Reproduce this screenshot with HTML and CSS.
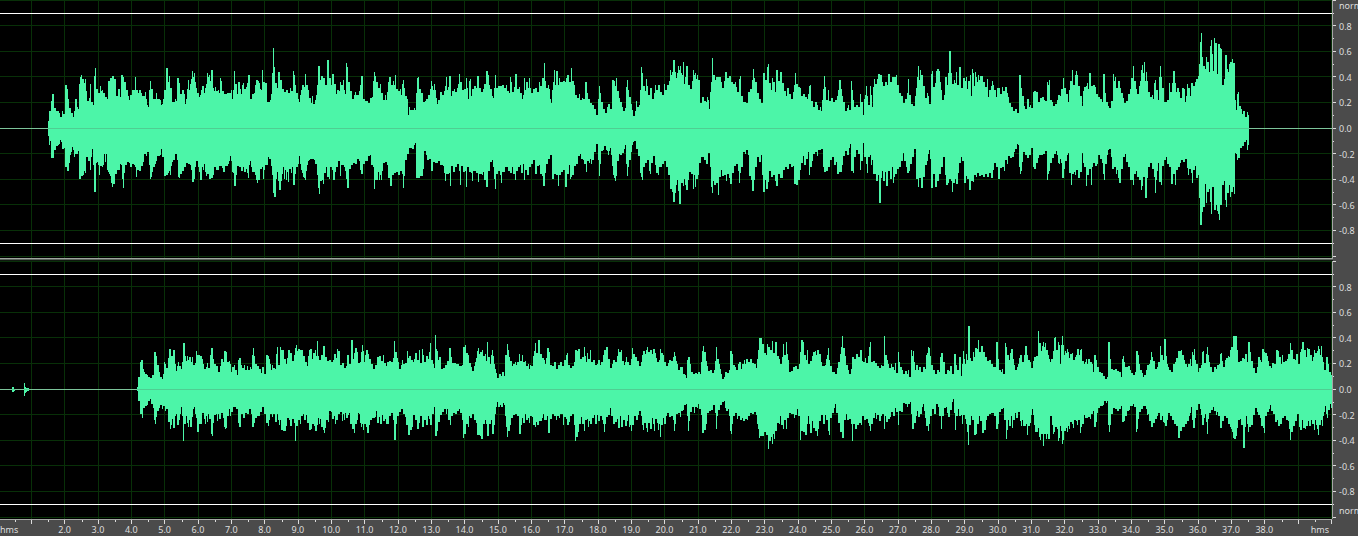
FILE: index.html
```html
<!DOCTYPE html>
<html lang="en">
<head>
<meta charset="utf-8">
<title>Waveform editor</title>
<link rel="stylesheet" href="styles.css">
</head>
<body>
<main class="editor">
  <section class="track" aria-label="Left channel">
    <svg class="wave" viewBox="0 0 1332 258" preserveAspectRatio="none"></svg>
    <div class="level">
      <svg class="level-ticks" viewBox="0 0 4 258" preserveAspectRatio="none"></svg>
      <div class="level-labels"><span>norm</span><span>0.8</span><span>0.6</span><span>0.4</span><span>0.2</span><span>0.0</span><span>-0.2</span><span>-0.4</span><span>-0.6</span><span>-0.8</span><span></span></div>
    </div>
  </section>
  <div class="divider"></div>
  <section class="track" aria-label="Right channel">
    <svg class="wave" viewBox="0 0 1332 258" preserveAspectRatio="none"></svg>
    <div class="level">
      <svg class="level-ticks" viewBox="0 0 4 258" preserveAspectRatio="none"></svg>
      <div class="level-labels"><span></span><span>0.8</span><span>0.6</span><span>0.4</span><span>0.2</span><span>0.0</span><span>-0.2</span><span>-0.4</span><span>-0.6</span><span>-0.8</span><span class="norm-end">norm</span></div>
    </div>
  </section>
  <footer class="time">
    <div class="time-scale">
      <svg class="time-ticks" viewBox="0 0 1332 5" preserveAspectRatio="none"></svg>
      <div class="time-labels"></div>
    </div>
  </footer>
</main>
<script src="waveform.js"></script>
</body>
</html>
```
FILE: styles.css
```css
* {
  box-sizing: border-box;
}

body {
  margin: 0;
  background: #4b4b4b;
  color: #dedede;
  font: 9px/12px "Noto Sans", "Open Sans", sans-serif;
}

.editor {
  display: flex;
  flex-direction: column;
  height: 100vh;
  overflow: hidden;
}

.track {
  display: flex;
  flex: 1;
  min-height: 0;
}

.wave {
  display: block;
  flex: 1;
  min-width: 0;
  height: 100%;
  background: #000;
  shape-rendering: crispEdges;
}

.level {
  display: flex;
  flex: none;
  width: 26px;
  height: 100%;
  border-left: 1px solid #a6a6a6;
  overflow: hidden;
}

.level-ticks {
  flex: none;
  width: 4px;
  height: 100%;
  shape-rendering: crispEdges;
}

.level-labels {
  display: grid;
  grid-template-rows: 13px repeat(9, 1fr) 15px;
  align-items: center;
  padding-left: 2px;
}

.level-labels span {
  padding-top: 2px;
  white-space: nowrap;
}

.level-labels span:first-child {
  align-self: start;
  padding-top: 0;
}

.level-labels .norm-end {
  padding-top: 0;
}

.divider {
  flex: none;
  height: 3px;
  margin-right: 25px;
  border-top: 1px solid #a0a5a0;
  border-bottom: 1px solid #101810;
  background: #5a625a;
}

.time {
  flex: none;
  height: 17px;
  margin-right: 26px;
  border-top: 1px solid #a6a6a6;
}

.time-ticks {
  display: block;
  width: 100%;
  height: 4px;
  shape-rendering: crispEdges;
}

.time-labels {
  display: grid;
  grid-template-columns: 48px repeat(37, minmax(0, 1fr)) 51px;
  text-align: center;
}

.time-labels span:first-child {
  text-align: left;
}

.time-labels span:last-child {
  padding-right: 3px;
  text-align: right;
}

.grid {
  fill: #083008;
}

.limit {
  fill: #fff;
}

.zero {
  fill: #7cc49a;
}

.signal {
  fill: #4cf5a8;
}

.axis {
  fill: #4fce92;
}

.tick {
  fill: #dcdcdc;
}
```
FILE: waveform.js
```js
// Peak envelopes. Each section starts at `x`, with `y` as its vertical origin,
// and holds "position,level" steps at three units to the pixel.
const TRACKS = [
  [
    { x: 0, y: 30, start: 144, end: 1020,
      top: "144,273 147,242 153,212 156,192 162,233 168,244 177,248 180,261 186,243 189,252 195,165 201,177 204,206 207,234 213,248 219,261 222,243 225,207 231,231 234,237 237,162 240,141 243,135 246,147 252,159 255,147 258,183 261,213 267,204 270,162 273,216 279,225 282,138 285,114 288,177 294,190 300,167 303,183 306,180 309,190 315,201 321,207 324,153 330,144 336,138 342,147 348,198 354,177 360,200 363,135 369,141 372,155 378,180 384,198 387,210 390,195 396,180 402,179 405,141 408,180 414,189 417,180 423,189 426,198 435,186 438,207 441,224 444,231 447,180 450,153 453,177 459,207 468,190 471,207 480,210 483,225 486,222 489,207 492,180 498,114 504,156 507,138 510,174 516,216 525,207 528,213 531,144 537,159 540,192 546,180 552,192 555,222 558,207 561,177 564,150 567,180 570,162 573,147 576,123 579,141 582,129 585,156 588,174 591,189 597,201 600,195 603,180 606,168 612,189 615,174 618,162 621,129 624,141 627,135 630,153 633,120 639,174 642,183 645,171 648,183 654,180 657,189 660,144 663,153 666,183 672,192 681,189 693,180 696,207 699,180 702,123 705,162 711,192 714,156 720,177 723,192 726,165 729,159 732,177 738,171 741,159 744,135 750,207 756,192 762,189 765,165 768,150 774,153 777,159 780,177 783,180 786,120 789,156 795,159 801,216 810,210 813,192 816,130 819,54 822,111 825,159 831,174 834,126 840,150 846,177 852,187 858,180 864,189 870,174 873,183 879,123 882,135 885,165 888,189 894,207 897,216 900,195 903,180 906,165 912,171 915,132 918,165 924,180 927,204 933,219 936,198 939,222 945,210 948,195 951,165 954,108 960,150 963,138 969,144 975,165 981,90 987,144 993,165 996,132 1002,162 1008,192 1011,180 1017,183",
      bottom: "144,318 147,345 150,333 153,384 162,360 168,348 174,345 177,342 180,330 183,336 186,357 192,354 195,411 201,423 207,399 210,375 213,366 216,351 219,360 222,381 225,372 234,363 237,447 243,438 249,435 252,423 255,429 258,381 264,393 270,420 273,381 276,357 279,405 282,486 288,399 291,396 294,405 297,435 300,408 306,411 309,405 312,372 315,396 318,372 321,420 324,426 327,432 330,438 333,459 336,470 339,462 345,432 351,420 360,402 363,405 366,447 369,474 372,429 375,405 381,396 387,399 390,411 396,402 402,405 405,411 408,441 411,420 417,423 423,408 429,396 432,372 438,378 441,366 447,405 450,447 453,441 456,426 459,411 465,402 468,393 471,378 480,375 483,357 486,381 492,438 498,435 504,429 507,423 510,435 513,408 516,396 519,390 525,372 531,390 534,441 537,444 540,432 546,423 552,411 558,399 564,402 570,405 573,420 576,456 582,447 585,411 588,393 594,411 597,426 600,450 606,411 609,420 612,402 615,426 618,438 621,432 627,447 633,444 639,435 642,411 648,420 654,420 657,408 666,414 669,426 675,408 684,402 687,393 690,378 693,393 696,426 699,429 702,468 708,435 711,408 717,411 723,423 729,411 732,426 738,417 741,429 744,444 747,405 750,393 753,411 756,426 765,435 768,450 771,459 774,450 780,417 786,411 789,447 792,420 795,405 804,381 807,387 813,408 816,435 819,489 822,501 828,447 831,426 834,453 837,480 843,453 846,432 849,411 852,447 855,420 858,450 861,426 864,456 867,417 873,429 876,411 879,465 885,432 888,411 894,402 897,378 900,402 903,420 906,429 909,441 912,444 915,450 918,423 921,405 924,393 927,390 930,387 942,390 945,402 951,435 954,474 957,492 960,453 966,450 969,462 972,429 978,411 981,441 987,447 990,411 996,420 999,450 1005,426 1008,411 1014,393" },
    { x: 340, y: 30, start: 0, end: 1020,
      top: "0,156 3,165 9,150 12,180 15,192 18,99 21,110 24,156 30,183 36,207 42,195 45,186 48,195 57,183 60,165 63,138 69,207 75,213 84,218 90,204 96,201 99,153 102,126 105,138 108,156 114,174 120,162 123,189 129,210 135,195 138,210 141,186 144,156 147,141 153,165 159,153 162,165 165,135 168,177 174,183 180,177 183,195 186,162 189,150 192,174 195,198 201,207 204,255 207,231 210,240 222,234 225,240 228,189 231,144 234,141 237,177 243,189 249,216 255,213 258,207 264,195 270,177 273,153 276,168 279,180 282,162 285,180 288,204 291,222 294,210 300,186 306,195 312,183 315,168 318,141 321,180 324,171 327,138 333,198 336,183 342,177 345,186 351,174 354,162 357,132 360,156 366,180 372,177 378,144 381,174 384,207 387,153 390,147 393,198 396,177 402,168 408,174 411,138 417,174 423,186 429,177 432,162 438,123 444,135 447,165 450,177 456,198 459,204 462,174 465,135 468,174 474,168 486,165 492,174 498,165 501,183 507,189 510,141 513,156 516,186 522,171 525,132 531,177 537,171 540,189 546,207 549,195 552,144 555,180 558,156 564,174 567,144 570,174 573,189 579,177 585,174 591,186 597,156 600,168 606,144 612,99 615,153 618,174 624,165 627,177 630,207 633,219 636,180 639,156 642,120 645,165 648,123 654,165 657,144 660,156 669,153 675,156 678,144 681,135 687,156 693,114 696,153 702,165 705,195 711,204 717,192 720,210 726,204 729,207 735,156 741,189 744,207 750,219 756,225 762,237 768,255 774,207 777,168 780,189 783,216 789,237 795,249 801,231 804,222 810,237 816,150 822,153 825,168 828,144 831,183 837,204 840,216 846,231 849,243 855,234 858,171 861,150 864,180 867,201 873,222 876,240 879,258 885,243 888,213 891,231 897,225 900,180 903,111 906,129 909,168 915,183 918,147 921,168 924,195 930,174 936,207 942,189 945,165 948,180 954,165 960,186 966,195 972,162 975,180 981,165 987,153 990,120 993,135 996,126 999,90 1005,126 1008,144 1011,129 1014,108 1017,120",
      bottom: "0,438 3,405 12,411 15,423 18,447 21,474 27,417 33,405 39,399 45,402 51,387 57,393 60,420 63,432 69,402 75,393 84,378 90,375 93,405 99,411 102,477 105,450 114,426 117,450 120,435 123,450 126,423 129,399 135,396 141,405 144,444 150,468 156,435 162,429 168,426 174,435 180,423 186,432 189,474 192,438 195,390 201,372 207,354 216,357 222,345 225,339 228,444 240,438 249,417 252,363 258,375 261,390 267,387 273,423 279,396 285,399 294,393 300,405 309,408 312,429 315,453 318,432 327,429 330,468 333,408 339,426 345,411 351,402 357,423 360,465 363,408 369,426 375,423 378,470 381,411 387,426 393,429 396,453 399,423 408,429 414,456 417,432 426,435 429,426 432,450 438,470 444,423 450,396 456,390 459,411 462,447 465,477 468,432 474,423 480,435 483,459 486,426 495,411 504,423 510,429 516,411 519,432 525,450 528,423 534,411 540,405 543,429 549,402 552,450 555,420 561,435 567,411 573,402 579,390 585,432 591,408 597,405 600,432 606,438 609,468 615,429 618,402 624,387 630,375 636,447 642,432 648,435 654,468 657,435 663,426 669,420 675,470 681,432 687,405 690,447 693,441 696,435 702,408 708,402 714,378 720,372 723,387 729,390 732,402 738,426 741,393 747,399 750,387 753,402 756,390 762,366 768,342 774,390 777,438 780,402 783,363 789,360 792,348 798,360 801,363 804,375 807,363 810,354 813,375 816,408 819,435 822,444 825,453 828,438 831,393 837,372 840,375 846,369 852,357 855,345 858,402 861,438 864,411 867,390 873,366 876,345 879,336 882,333 888,357 894,378 900,429 903,441 906,450 909,411 915,399 921,390 927,423 930,432 933,399 939,378 945,405 948,429 954,435 957,411 966,402 972,393 978,411 984,435 990,477 996,486 999,516 1005,489 1008,465 1011,450 1014,483 1017,522" },
    { x: 680, y: 30, start: 0, end: 1020,
      top: "0,108 3,129 6,135 9,96 12,162 15,141 18,108 24,165 30,177 36,153 39,120 42,135 45,129 48,147 51,135 54,150 60,219 66,201 72,213 78,216 81,201 84,210 87,237 90,186 93,156 96,84 99,135 105,150 108,141 117,141 123,156 126,174 132,153 135,126 141,144 147,138 153,156 159,162 165,156 168,171 171,186 177,147 180,138 183,198 189,216 198,219 204,186 210,177 216,150 219,117 222,144 225,156 231,189 237,207 243,219 249,129 255,150 261,111 264,102 267,159 273,180 276,144 279,156 285,186 288,120 294,153 300,126 306,159 312,183 318,198 321,174 327,192 333,207 339,186 342,165 345,129 348,162 354,171 360,174 363,198 369,192 375,201 381,207 384,192 387,168 390,165 393,213 399,231 405,216 411,225 414,240 420,231 423,243 426,210 429,177 432,138 435,171 438,210 444,180 447,213 453,204 459,216 465,210 471,198 474,180 477,150 483,177 486,198 489,216 495,243 501,234 504,225 507,240 513,153 516,180 519,210 522,231 528,225 534,231 540,192 543,216 549,255 552,207 555,195 558,168 561,198 564,225 570,168 573,195 576,231 579,171 582,147 585,162 591,147 594,132 600,135 606,156 609,168 615,156 621,165 624,132 630,156 636,141 645,141 648,135 651,165 657,189 663,198 669,219 675,207 681,189 684,147 687,195 693,222 699,228 705,198 708,174 711,141 714,108 717,150 720,120 723,135 729,168 735,204 741,189 744,198 747,222 753,132 756,123 759,171 765,159 768,123 771,117 777,123 780,156 783,180 786,210 792,195 795,141 801,165 804,129 807,63 813,129 816,162 822,150 825,159 828,126 831,165 837,111 843,174 849,144 855,153 858,141 861,177 864,153 870,135 873,198 876,117 879,129 882,168 885,126 888,141 891,156 894,135 897,150 900,138 909,156 915,171 921,147 924,201 927,180 933,168 936,153 939,165 942,180 948,201 951,174 960,192 966,171 969,183 975,171 981,189 984,201 987,219 993,231 999,243 1005,237 1011,249 1017,135",
      bottom: "0,522 3,459 9,468 12,447 15,465 18,480 24,450 27,426 33,432 39,477 42,435 45,471 48,447 54,435 57,399 63,381 72,390 78,402 84,369 90,411 93,470 96,489 99,453 102,465 108,459 114,495 117,441 123,420 126,438 132,435 138,453 141,432 147,444 150,462 156,429 162,408 168,402 174,423 177,459 180,429 183,411 189,366 195,372 198,360 204,375 207,438 213,450 216,483 222,450 225,411 231,381 237,396 243,375 246,435 249,486 255,450 258,477 264,456 267,423 273,441 279,435 285,453 288,468 294,432 300,444 309,420 315,411 321,417 327,402 333,411 339,408 342,462 348,465 354,450 360,420 363,399 369,378 372,405 378,387 384,366 387,435 390,411 396,393 399,372 405,366 411,378 414,360 423,357 429,411 432,426 438,423 444,411 450,390 456,381 462,405 468,396 471,432 477,426 486,405 489,378 495,363 501,375 507,354 510,342 513,423 519,429 522,381 528,360 534,372 540,420 543,393 549,339 552,381 558,402 561,429 564,381 570,375 573,405 576,390 579,432 585,432 588,453 594,435 597,519 603,444 606,423 609,453 615,426 618,468 624,423 630,447 636,411 639,459 642,441 645,432 651,417 657,411 663,393 669,369 672,393 678,411 681,429 687,423 690,402 696,381 702,357 708,447 714,470 717,444 723,474 729,441 735,405 741,393 744,372 747,360 750,387 753,474 759,432 765,470 771,453 777,432 783,411 789,381 795,435 798,465 804,459 807,447 813,453 816,486 819,459 825,447 828,462 834,429 837,399 843,381 846,393 852,459 858,438 861,447 867,480 873,453 879,456 882,435 888,441 891,429 897,438 903,435 909,441 915,432 921,441 927,429 933,444 939,420 942,399 948,411 954,447 960,414 966,411 972,423 975,390 981,402 984,378 990,384 996,381 1002,366 1005,357 1011,342 1017,411" },
    { x: 1018, y: 20, start: 0, end: 693,
      top: "0,279 3,165 9,204 12,228 18,258 21,267 27,237 33,261 36,255 39,263 45,216 48,213 54,216 60,246 66,234 72,231 78,240 81,243 87,186 90,195 93,180 96,240 102,246 105,258 111,252 117,240 120,225 126,228 129,207 135,174 138,204 144,222 150,246 153,210 156,183 162,150 165,195 171,165 174,153 177,165 180,198 186,228 192,258 195,213 198,201 204,198 207,189 210,207 213,159 219,198 225,195 231,201 234,222 240,231 246,237 252,246 255,162 261,219 264,246 270,258 273,264 279,243 285,162 288,183 291,171 294,204 300,183 306,204 309,219 315,234 318,249 324,243 330,222 336,207 339,174 345,138 348,183 354,207 357,222 363,198 366,183 369,150 372,135 375,159 378,126 381,183 384,156 387,183 390,216 396,231 402,225 405,237 408,189 411,180 414,210 420,240 423,171 426,138 429,171 432,204 438,246 447,240 453,189 456,216 462,189 465,153 471,189 474,216 477,204 483,216 486,234 492,204 498,207 501,246 504,228 507,192 510,204 516,228 519,189 525,198 531,186 534,177 540,168 543,132 546,66 549,39 552,111 555,138 561,147 564,111 567,126 573,156 576,78 579,60 582,102 585,153 588,54 591,69 597,162 600,72 606,84 609,87 612,195 618,177 621,105 627,147 630,156 633,132 636,126 642,117 645,129 651,240 654,270 657,222 660,216 663,258 669,267 672,282 675,273 681,291 687,276 690,285",
      bottom: "0,375 3,441 6,462 9,453 12,426 15,396 21,405 27,414 33,405 39,384 45,441 48,447 54,429 60,414 63,405 75,402 81,393 87,480 90,462 93,453 96,429 102,414 108,402 114,393 117,405 120,429 123,432 126,417 129,429 132,474 138,447 141,423 147,405 150,399 153,459 159,495 162,462 168,456 171,465 174,450 180,474 186,456 192,399 195,429 198,441 204,498 207,465 213,447 219,495 222,441 225,429 231,438 237,432 240,405 246,417 252,429 255,462 258,480 261,432 267,405 270,390 273,387 279,411 282,447 288,441 294,462 297,450 300,474 303,489 309,447 315,411 321,402 324,426 330,441 336,480 345,495 348,462 354,453 357,471 363,480 369,510 372,498 375,471 381,534 387,474 390,441 396,429 402,447 408,471 411,519 414,480 417,453 420,429 423,486 429,495 432,438 438,420 444,411 447,432 453,441 459,492 465,462 471,495 474,450 480,441 486,429 489,420 495,426 501,417 507,444 510,465 513,447 519,459 522,489 525,450 531,438 534,474 540,465 543,534 546,615 552,576 555,561 561,492 564,549 567,516 573,507 576,546 579,582 582,501 588,570 594,555 597,573 600,582 603,600 606,555 612,495 618,483 621,540 624,561 627,519 633,495 636,531 639,516 645,501 648,522 651,399 654,402 657,420 660,414 666,384 672,378 678,366 684,360 687,390 690,375" },
  ],
  [
    { x: 0, y: 49, start: 36, end: 45, top: "36,231 42,237", bottom: "36,246 42,243" },
    { x: 0, y: 49, start: 72, end: 87, top: "72,219 75,231 78,234 84,235", bottom: "72,258 75,249 78,246 81,243" },
    { x: 0, y: 49, start: 411, end: 1020,
      top: "411,231 414,201 420,156 423,150 429,177 432,186 435,192 441,195 444,201 450,204 456,195 462,126 468,138 471,165 477,186 480,201 486,207 489,192 492,156 495,162 498,174 504,144 507,117 513,138 519,120 525,162 528,183 531,168 534,156 537,168 543,177 546,156 549,99 555,138 558,153 561,138 564,150 567,141 573,156 576,141 579,165 585,159 588,123 591,135 600,138 606,147 609,162 612,177 618,171 621,159 624,174 630,135 633,114 639,147 642,162 648,168 654,186 660,168 663,147 669,156 672,123 678,126 681,156 687,153 690,162 693,186 696,171 702,165 705,180 711,195 714,150 717,144 723,165 726,174 732,165 735,180 741,168 744,180 750,171 753,177 756,135 759,114 762,138 765,162 771,168 777,177 783,189 786,171 792,192 798,135 804,138 807,147 810,162 813,180 816,165 819,174 825,177 828,132 831,111 834,165 840,111 843,120 852,147 858,162 861,144 864,120 870,129 876,153 882,135 885,114 888,105 891,123 894,117 900,120 909,138 915,156 921,168 924,138 927,120 930,117 936,147 939,129 945,120 948,138 951,93 954,138 957,150 963,135 969,108 975,141 981,153 987,150 993,156 999,150 1002,132 1008,144 1011,117 1014,123",
      bottom: "411,243 414,273 420,312 426,324 429,294 435,288 441,285 444,273 450,267 453,282 459,294 462,330 465,342 468,321 471,303 477,294 480,285 486,297 489,288 495,303 498,297 504,336 510,357 513,345 516,327 519,354 525,318 528,312 531,345 537,330 540,312 543,291 546,318 549,393 552,342 558,318 561,339 564,351 567,330 570,351 576,321 579,297 582,291 585,312 588,324 591,366 597,342 606,309 612,327 615,342 618,318 621,336 624,312 627,327 633,372 636,378 639,339 642,315 648,312 651,333 654,312 657,327 663,309 669,324 672,351 675,357 678,354 681,318 687,297 690,318 693,306 699,291 708,297 714,339 717,351 723,312 729,324 735,309 741,312 747,297 753,312 756,351 762,339 765,324 771,318 780,306 786,291 792,312 798,339 804,348 807,330 810,312 816,321 819,312 825,336 831,312 834,330 837,345 840,330 843,360 849,363 858,348 861,324 867,330 870,348 876,327 882,339 885,393 888,348 894,330 900,342 903,318 909,312 912,330 918,315 921,339 927,360 933,357 936,342 942,348 945,363 951,345 954,324 957,342 960,327 963,351 969,360 972,369 975,354 978,330 984,336 987,303 993,306 996,327 1002,318 1005,342 1008,330 1014,312" },
    { x: 340, y: 49, start: 0, end: 1020,
      top: "0,165 6,159 12,174 18,168 21,135 27,162 33,90 39,147 42,129 45,114 51,126 54,159 60,156 63,126 66,105 69,123 72,156 75,135 78,120 84,132 87,147 93,162 99,177 105,165 111,141 117,138 123,153 129,135 132,159 138,168 141,156 147,153 153,156 159,144 162,93 165,126 171,144 174,156 177,177 183,165 186,150 189,162 195,159 201,123 204,144 207,138 213,150 219,156 222,147 225,129 231,150 237,120 240,159 246,117 249,135 252,156 258,138 264,147 267,126 270,99 273,150 279,162 282,174 285,75 288,117 291,123 294,150 297,141 303,177 309,174 315,165 321,153 327,114 333,141 336,159 348,162 357,168 366,165 369,111 375,105 378,129 384,135 387,159 393,171 396,183 402,168 405,156 408,144 411,123 414,114 417,132 420,126 426,120 429,138 435,132 438,153 441,96 444,141 450,162 453,135 456,120 459,138 462,162 465,177 468,189 471,204 477,192 483,198 486,186 492,198 495,135 501,102 504,120 507,141 510,153 516,168 519,162 525,156 528,165 531,156 537,132 540,153 546,135 549,156 555,153 558,168 564,162 567,177 570,165 573,168 579,138 582,123 585,99 588,129 594,90 600,132 606,144 612,150 615,162 618,144 621,114 627,126 630,165 636,168 642,156 648,177 654,165 660,156 666,168 672,150 678,135 681,129 684,165 690,174 696,168 702,156 705,120 711,123 714,117 720,147 726,141 732,111 735,138 738,156 741,129 744,147 750,120 753,156 759,150 765,165 771,162 774,150 780,165 783,156 789,135 792,120 798,111 804,147 810,174 816,162 819,150 825,156 831,138 834,117 837,126 843,120 846,153 852,165 855,156 858,141 861,156 867,165 873,147 876,114 879,132 885,141 891,153 897,168 903,156 906,135 909,123 915,132 918,120 921,111 924,126 930,120 936,132 939,117 945,129 948,144 951,156 957,150 960,117 963,129 969,135 972,156 978,168 984,159 987,150 993,153 999,141 1002,126 1005,138 1008,153 1011,162 1014,180",
      bottom: "0,306 6,333 9,312 12,330 15,309 18,324 24,315 27,309 30,342 36,357 42,369 45,342 51,330 54,309 57,312 60,339 63,351 66,342 69,360 72,342 78,351 81,369 87,345 90,330 96,324 105,321 108,303 111,339 117,321 120,342 126,315 129,333 135,327 138,342 147,318 153,309 159,330 162,390 168,342 171,318 177,306 183,297 189,312 195,321 198,345 204,375 210,360 216,351 219,315 225,330 231,357 237,339 240,318 246,351 252,330 258,345 264,318 267,327 270,345 276,312 282,291 285,378 291,363 294,336 300,315 306,306 312,297 318,312 321,297 324,330 330,345 333,318 339,309 345,312 351,303 357,297 360,309 366,330 369,384 372,372 378,342 384,351 387,318 390,324 396,312 402,330 408,339 411,375 420,378 423,387 429,342 435,330 438,342 441,378 447,342 453,330 456,372 462,345 465,312 468,291 471,276 474,291 480,285 483,291 489,279 492,285 495,318 498,351 501,381 504,363 510,345 513,324 519,315 525,312 531,318 537,372 543,345 546,324 549,339 555,312 558,330 564,324 567,339 570,318 576,321 579,345 585,351 588,336 591,345 597,333 606,324 609,312 612,330 621,318 624,369 630,327 636,312 642,318 648,330 651,318 657,324 660,312 669,345 672,321 678,327 681,345 687,336 690,318 696,312 702,345 705,393 708,381 714,366 717,342 723,321 726,342 732,363 735,330 741,327 744,351 747,333 750,342 756,324 762,315 765,342 771,315 774,333 780,318 786,330 789,342 792,366 795,342 798,321 804,315 810,294 813,318 819,342 825,336 831,327 834,354 840,318 843,351 849,330 855,348 861,333 864,315 867,351 870,345 873,363 876,345 882,318 888,330 894,315 897,303 903,318 906,345 909,360 912,339 918,354 921,366 924,339 930,357 936,324 939,342 942,363 945,327 951,339 954,360 957,342 960,381 963,345 969,324 972,342 978,318 981,309 987,321 993,318 999,330 1002,363 1005,342 1008,312 1014,309" },
    { x: 680, y: 49, start: 0, end: 1020,
      top: "0,171 9,192 15,195 18,204 21,150 24,141 30,162 33,186 39,192 45,189 51,192 54,186 60,192 63,156 66,123 69,108 72,126 78,153 81,168 84,183 90,180 96,189 102,180 105,153 108,111 111,147 117,162 120,177 123,192 126,207 132,201 135,186 141,189 147,180 150,123 156,132 159,165 165,171 168,180 174,162 177,156 183,177 186,162 192,150 195,162 198,147 204,156 210,147 216,159 222,162 228,174 231,147 234,120 237,84 246,102 252,129 258,135 261,102 264,111 270,120 276,93 279,129 285,96 291,138 297,147 300,162 306,141 309,102 312,135 318,96 321,132 324,150 327,186 333,183 339,171 345,168 351,177 357,162 360,126 363,90 369,96 372,135 378,150 381,120 384,162 390,153 396,138 399,126 405,123 408,135 411,120 417,132 423,156 426,168 435,165 438,147 441,135 444,114 447,150 450,168 456,186 465,192 471,174 474,156 480,132 483,111 486,78 489,114 495,138 498,165 504,180 507,192 513,177 516,141 522,147 528,132 534,141 540,120 546,153 549,156 555,144 558,159 564,138 567,111 570,96 573,156 579,153 585,159 591,168 597,174 603,165 606,168 612,78 615,135 621,150 624,162 627,174 633,162 636,171 642,180 645,159 648,189 654,126 657,156 660,171 666,180 669,192 675,183 681,192 684,180 687,201 693,120 696,138 699,123 702,156 705,180 708,165 714,180 717,171 723,186 729,171 735,177 738,135 741,129 744,111 747,114 750,138 753,165 759,180 765,192 771,180 777,186 780,141 783,129 789,156 795,192 801,180 807,183 810,168 816,192 822,132 828,165 831,180 837,141 843,198 846,162 849,123 852,147 855,162 858,132 861,150 864,48 870,144 873,153 879,126 882,141 885,114 891,117 894,90 897,126 903,108 909,126 915,141 921,153 927,150 933,162 939,171 948,96 954,147 957,180 963,186 966,177 969,192 975,99 978,111 981,135 987,150 990,129 993,117 999,147 1002,165 1005,180 1011,171 1014,162 1017,147",
      bottom: "0,321 3,303 9,300 12,285 18,282 21,318 24,363 27,333 30,306 36,291 42,309 45,291 51,294 54,282 57,297 63,315 66,369 72,360 78,342 81,309 87,303 93,300 99,285 105,309 108,357 111,318 114,300 120,285 126,276 132,273 135,294 138,303 144,297 147,318 150,363 153,372 156,342 159,318 165,309 171,327 174,318 180,330 186,324 189,333 195,327 201,330 204,318 210,309 216,312 222,306 228,315 231,342 234,357 237,384 240,378 252,366 258,375 264,417 267,393 273,381 276,402 279,372 282,387 285,363 291,339 297,342 300,318 303,345 309,357 312,330 318,357 321,324 327,309 333,312 342,324 345,315 351,297 354,318 360,390 363,363 369,366 375,375 381,342 384,318 387,342 390,369 396,333 399,354 405,363 411,378 414,357 417,333 423,315 429,342 435,315 438,330 444,363 447,375 450,324 456,309 462,294 465,282 468,309 474,339 480,366 486,384 492,330 498,312 501,330 507,327 513,342 516,393 519,342 525,357 531,345 537,339 543,345 546,318 552,330 558,327 564,339 567,348 570,363 573,342 579,324 585,309 588,327 591,315 597,333 603,318 606,312 612,357 615,318 618,336 624,327 630,321 633,306 639,318 645,294 648,306 654,345 657,303 663,306 669,279 675,282 681,291 684,282 690,276 693,312 696,357 702,339 708,318 711,303 714,321 720,312 726,291 729,282 732,303 735,324 738,348 744,363 747,342 750,318 756,297 762,312 768,282 774,291 777,318 783,357 786,318 792,294 798,291 801,309 804,321 810,300 816,276 819,267 822,309 825,360 828,318 834,297 837,318 843,315 846,342 849,315 855,327 858,342 861,366 864,405 867,345 873,318 876,330 882,375 888,372 891,342 897,318 900,333 906,369 912,360 918,330 921,318 927,312 933,309 942,318 948,357 954,342 957,306 963,297 969,294 972,330 978,387 981,360 984,330 987,348 993,318 996,354 999,330 1005,309 1008,324 1014,306" },
    { x: 1018, y: 49, start: 0, end: 942,
      top: "0,180 3,144 6,135 12,156 18,135 21,108 27,135 30,150 36,156 39,174 45,153 48,141 54,138 60,63 63,99 69,123 72,108 75,96 78,111 81,99 84,120 90,135 93,147 96,156 99,147 105,123 108,84 111,81 114,120 120,96 123,105 126,162 129,105 132,78 135,105 138,135 141,123 144,129 147,117 150,126 153,144 156,132 162,129 165,150 171,141 174,135 177,117 183,135 186,120 189,117 192,153 198,162 201,156 204,147 207,162 210,147 216,156 222,162 225,186 228,135 234,150 237,171 243,186 249,189 255,198 261,207 267,201 270,96 276,147 279,177 285,180 291,177 297,183 303,186 309,201 312,147 315,138 318,156 321,171 330,168 336,180 339,189 345,195 351,186 354,123 360,135 363,162 366,180 372,189 375,201 378,195 384,180 387,165 393,162 396,150 399,126 402,141 405,153 411,177 417,171 420,156 426,108 429,135 435,150 438,87 444,138 447,162 450,171 453,180 459,186 465,162 471,156 474,144 480,123 489,120 492,135 498,150 501,162 507,171 510,162 516,147 519,168 522,126 525,135 528,117 531,150 534,162 540,186 543,174 549,165 552,126 555,123 558,159 564,132 567,111 570,135 573,156 576,171 582,186 588,171 594,177 597,165 603,162 606,132 609,129 612,153 615,171 621,150 624,144 630,138 633,141 636,120 639,111 645,78 657,120 660,156 666,153 672,144 678,147 681,132 687,156 690,96 696,126 699,153 705,174 711,189 717,171 720,141 726,150 729,156 732,117 738,126 741,129 747,138 750,153 753,168 759,174 762,159 768,162 774,120 780,123 783,141 789,162 792,135 795,156 801,153 807,147 810,132 816,99 819,120 825,147 831,150 834,132 840,162 846,126 849,117 852,96 858,120 864,141 867,114 870,117 876,135 882,153 885,141 888,120 891,129 897,123 900,108 903,117 906,135 909,108 912,141 915,156 918,180 924,141 930,162 933,186 939,195",
      bottom: "0,288 3,306 6,333 9,348 12,330 15,348 24,342 27,375 30,348 36,339 39,315 42,297 45,315 48,345 51,366 60,354 63,381 66,390 69,372 75,408 78,372 84,387 87,372 90,387 96,318 102,345 105,372 108,366 111,351 117,357 120,393 123,384 126,348 129,363 132,402 135,390 138,363 144,354 147,366 150,348 153,357 156,336 162,342 165,354 168,330 174,333 177,345 180,330 186,369 189,351 192,342 198,315 201,324 210,321 216,327 219,312 225,303 228,351 234,336 237,309 240,294 246,288 255,285 258,273 264,279 267,273 270,345 273,366 276,345 279,312 285,294 291,297 297,303 303,297 309,288 312,336 318,333 321,318 327,303 333,300 336,288 345,282 348,291 354,366 357,357 360,327 363,306 369,297 375,288 384,297 387,315 390,312 393,333 399,351 405,339 411,327 417,318 420,309 426,330 432,318 435,336 438,339 441,348 447,330 450,309 456,318 462,330 468,342 474,348 480,384 486,363 492,351 501,342 507,333 513,318 516,309 519,291 522,330 525,354 531,324 534,300 540,282 546,297 549,315 552,345 558,324 561,312 564,336 567,372 570,327 573,309 579,300 585,291 588,303 594,315 597,306 600,318 606,354 612,333 618,318 624,324 630,342 636,351 639,357 642,366 645,384 648,387 654,378 657,354 660,330 666,327 669,345 675,414 681,351 684,318 687,342 690,366 693,351 699,345 705,315 711,294 717,306 720,315 726,324 729,348 735,354 738,369 741,318 747,306 753,297 756,285 759,303 765,312 771,336 777,330 780,348 786,342 792,324 798,318 804,330 810,333 813,357 816,390 819,366 825,348 831,333 837,312 843,351 846,360 852,330 855,354 861,357 864,348 870,333 873,348 879,330 882,342 888,360 891,330 894,345 897,357 900,375 903,345 909,330 912,348 915,318 918,306 921,288 924,312 927,324 930,300 936,282 939,294" },
  ],
];

const LEVELS = [0, 25, 51, 76, 102, 128, 153, 179, 204, 230, 256];
const seconds = Array.from({ length: 40 }, (_, i) => Math.floor((94 + i * 100) / 3));
const rect = (name, x, y, w, h) =>
  `<rect class="${name}" x="${x}" y="${y}" width="${w}" height="${h}"/>`;

function steps(text, section) {
  return text.split(" ").map((pair) => {
    const [x, y] = pair.split(",").map(Number);
    return [section.x + Math.round(x / 3), section.y + Math.round(y / 3)];
  });
}

function outline(section) {
  const end = section.x + section.end / 3;
  const top = steps(section.top, section);
  const bottom = steps(section.bottom, section);
  let d = `M${section.x + section.start / 3} 128`;
  for (const [x, y] of top) d += `H${x}V${y}`;
  d += `H${end}V${bottom[bottom.length - 1][1]}`;
  for (let i = bottom.length - 1; i > 0; i--) d += `H${bottom[i][0]}V${bottom[i - 1][1]}`;
  return `<path class="signal" d="${d}H${bottom[0][0]}V128Z"/>`;
}

document.querySelectorAll(".wave").forEach((svg, i) => {
  // The second channel's vertical origins are measured from its own top edge.
  svg.innerHTML =
    seconds.map((x) => rect("grid", x, 0, 1, 258)).join("") +
    LEVELS.map((y) => rect("grid", 0, y, 1332, 1)).join("") +
    rect("zero", 0, 128, 1332, 1) +
    TRACKS[i].map(outline).join("") +
    TRACKS[i].map((s) => rect("axis", s.x + s.start / 3, 128, (s.end - s.start) / 3, 1)).join("") +
    rect("limit", 0, 13, 1332, 1) + rect("limit", 0, 243, 1332, 1);
});

document.querySelectorAll(".level-ticks").forEach((svg) => {
  svg.innerHTML =
    LEVELS.map((y) => rect("tick", 0, y, 3, 1)).join("") +
    LEVELS.slice(0, -1).map((y) => rect("tick", 0, y + 13, 1, 1)).join("");
});

document.querySelector(".time-ticks").innerHTML =
  seconds.map((x) => rect("tick", x, 0, 1, 5) + rect("tick", x - 16, 0, 1, 2)).join("");

document.querySelector(".time-labels").innerHTML =
  "<span>hms</span>" +
  Array.from({ length: 37 }, (_, i) => `<span>${(i + 2).toFixed(1)}</span>`).join("") +
  "<span>hms</span>";
```
